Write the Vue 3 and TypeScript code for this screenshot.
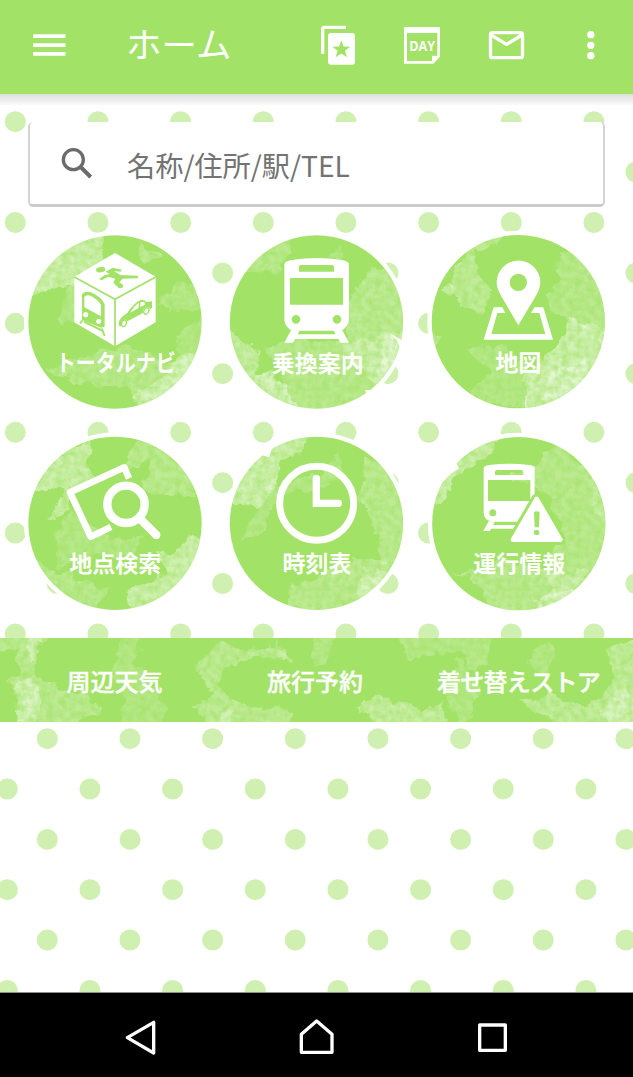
<script setup lang="ts">
interface Wash { d: string; o: number }
interface Tile {
  kind: 'total' | 'train' | 'map' | 'spot' | 'clock' | 'status'
  label: string
  box: string
  cx: number
  cy: number
  labelX: number
  labelY: number
  labelWidth: number
  washes: Wash[]
  nick?: string
}
interface DotRow { y: number; x: number }

const STEP = 82.66
const dotRows: DotRow[] = [
  { y: 121.7, x: 15.3 }, { y: 172, x: 57.3 }, { y: 222.5, x: 15.3 },
  { y: 273, x: 57.3 }, { y: 323.3, x: 15.3 }, { y: 373.7, x: 57.3 },
  { y: 432.3, x: 15.3 }, { y: 482.7, x: 57.3 }, { y: 533, x: 15.3 },
  { y: 583.5, x: 57.3 }, { y: 634, x: 15.3 },
  { y: 738.7, x: 47.3 }, { y: 789, x: 7.3 }, { y: 839.4, x: 47.3 },
  { y: 889.7, x: 7.3 }, { y: 940, x: 47.3 }, { y: 990.4, x: 7.3 },
]
const dots = dotRows.flatMap((r) =>
  Array.from({ length: 8 }, (_, k) => ({ x: r.x + k * STEP, y: r.y })),
)

const tiles: Tile[] = [
  {
    kind: 'total', label: 'トータルナビ', box: '39 30 522 522', cx: 300, cy: 291,
    labelX: 302, labelY: 437, labelWidth: 360,
    washes: [
      { d: 'M30 210L60 130L150 40L262 20L262 80L245 130L240 165L180 190L100 190Z', o: 0.5 },
      { d: 'M150 200L250 150L250 230L190 290L130 310Z', o: 0.25 },
      { d: 'M370 55L440 90L420 112L375 118Z', o: 0.3 },
      { d: 'M430 235L500 170L570 170L570 260L520 262Z', o: 0.25 },
      { d: 'M470 340L570 270L570 400L500 400Z', o: 0.22 },
      { d: 'M90 430L200 390L330 360L460 420L540 380L540 480L380 560L330 480L180 480Z', o: 0.27 },
      { d: 'M480 395L570 370L540 460L470 510L400 550L350 510L440 460Z', o: 0.45 },
    ],
  },
  {
    kind: 'train', label: '乗換案内', box: '45 30 522 522', cx: 304.5, cy: 291,
    labelX: 308, labelY: 440, labelWidth: 276,
    washes: [
      { d: 'M90 140L150 60L230 30L220 90L200 140L120 140Z', o: 0.28 },
      { d: 'M345 90L380 65L390 90L365 115Z', o: 0.22 },
      { d: 'M405 200L470 130L580 150L580 420L480 470L380 400L400 290Z', o: 0.32 },
      { d: 'M20 290L80 350L140 380L120 440L200 470L260 570L100 520Z', o: 0.42 },
      { d: 'M150 370L260 340L400 350L580 320L560 480L380 570L230 560L200 440Z', o: 0.28 },
      { d: 'M510 340L570 340L560 420L490 470Z', o: 0.4 },
      { d: 'M120 440L190 460L250 550L170 520Z', o: 0.3 },
    ],
    nick: 'M523 323L570 352L562 385L545 345ZM450 495L462 495L480 505L458 515Z',
  },
  {
    kind: 'map', label: '地図', box: '51 30 522 522', cx: 310, cy: 290,
    labelX: 310, labelY: 439, labelWidth: 139,
    washes: [
      { d: 'M120 120L180 55L280 25L240 60L180 80L180 120L230 190L210 260L150 250L100 200Z', o: 0.35 },
      { d: 'M80 185L120 180L105 215Z', o: 0.38 },
      { d: 'M425 80L500 70L590 190L590 320L450 290L390 220L430 160Z', o: 0.27 },
      { d: 'M330 450L440 360L470 270L590 330L570 460L450 560L330 560Z', o: 0.52 },
      { d: 'M160 370L270 360L330 410L340 550L220 540L170 500L230 440Z', o: 0.24 },
      { d: 'M40 320L80 330L60 380Z', o: 0.28 },
      { d: 'M390 450L520 400L500 500L390 550Z', o: 0.35 },
    ],
  },
  {
    kind: 'spot', label: '地点検索', box: '39 36 522 522', cx: 300, cy: 295,
    labelX: 301, labelY: 442, labelWidth: 276,
    washes: [
      { d: 'M50 190L120 100L230 40L220 130L260 170L160 200L170 260L100 290L150 190Z', o: 0.48 },
      { d: 'M350 60L400 35L520 130L540 210L440 210L385 200L410 100L330 140Z', o: 0.3 },
      { d: 'M130 310L180 260L260 330L380 340L350 400L250 380L120 430Z', o: 0.23 },
      { d: 'M430 390L570 330L550 440L440 530L350 560L330 500L450 450Z', o: 0.5 },
      { d: 'M60 410L170 460L280 490L240 560L100 510Z', o: 0.28 },
    ],
  },
  {
    kind: 'clock', label: '時刻表', box: '45 36 522 522', cx: 304.5, cy: 295,
    labelX: 306, labelY: 442, labelWidth: 207,
    washes: [
      { d: 'M40 240L90 120L180 50L280 30L265 70L200 110L190 170L140 240L60 250Z', o: 0.5 },
      { d: 'M150 190L320 150L370 80L380 170L280 200L200 200L140 330L80 350L130 250Z', o: 0.24 },
      { d: 'M450 100L510 110L590 230L580 390L500 430L470 270L430 220Z', o: 0.3 },
      { d: 'M230 480L440 400L570 420L480 520L330 570L210 550Z', o: 0.3 },
      { d: 'M440 435L520 450L480 510L430 515Z', o: 0.45 },
    ],
    nick: 'M125 75L145 92L162 97L170 75L145 55Z',
  },
  {
    kind: 'status', label: '運行情報', box: '51 36 522 522', cx: 311.5, cy: 296,
    labelX: 313, labelY: 442, labelWidth: 276,
    washes: [
      { d: 'M50 240L80 150L160 70L250 40L215 100L170 130L110 160L80 250Z', o: 0.46 },
      { d: 'M280 160L370 110L420 50L590 180L590 440L450 540L380 450L440 330L410 220L350 180Z', o: 0.28 },
      { d: 'M110 440L180 450L260 400L400 450L520 440L440 540L330 570L220 560L190 480Z', o: 0.3 },
      { d: 'M360 530L420 490L480 500L410 550Z', o: 0.48 },
      { d: 'M500 110L590 280L560 300Z', o: 0.22 },
    ],
    nick: 'M122 112L132 130L108 146L84 170L70 150L100 105Z',
  },
]

const bandWashes: Wash[] = [
  { d: 'M-20 -10L160 -10L110 30L100 90L130 130L260 170L300 220L220 270L40 270L70 170L20 130L60 100L50 30L-20 40Z', o: 0.3 },
  { d: 'M90 -10L125 -10L110 70L85 70ZM50 120L100 110L120 180L110 270L50 260Z', o: 0.4 },
  { d: 'M370 -10L430 -10L400 70L440 130L500 210L470 270L350 260L380 180L340 90Z', o: 0.22 },
  { d: 'M580 80L660 10L700 40L830 20L870 60L690 70L660 130L700 190L870 220L850 270L620 260L580 200L640 170Z', o: 0.33 },
  { d: 'M660 220L700 210L700 270L650 265ZM835 -10L860 50L840 65Z', o: 0.3 },
  { d: 'M930 -10L1010 -10L980 60L940 90ZM1190 -10L1480 -10L1460 80L1400 100L1380 40L1220 60Z', o: 0.25 },
  { d: 'M1070 200L1130 170L1260 220L1330 190L1340 270L1130 270Z', o: 0.42 },
  { d: 'M1370 60L1440 150L1400 270L1350 200ZM1580 70L1640 10L1670 50L1640 110Z', o: 0.23 },
  { d: 'M1560 190L1650 170L1760 210L1850 120L1820 30L1910 0L1910 270L1670 270L1620 220Z', o: 0.38 },
  { d: 'M1800 220L1860 160L1910 180L1910 260L1830 250Z', o: 0.33 },
]
const bandItems: string[] = ['周辺天気', '旅行予約', '着せ替えストア']
</script>

<template>
  <div class="screen">
    <svg class="dots" viewBox="0 0 633 992" width="633" height="992">
      <defs>
        <filter id="wash" filterUnits="userSpaceOnUse" x="-40" y="-40" width="1980" height="660" color-interpolation-filters="sRGB">
          <feTurbulence type="fractalNoise" baseFrequency="0.022" numOctaves="5" seed="7" result="edge" />
          <feDisplacementMap in="SourceGraphic" in2="edge" scale="46" xChannelSelector="R" yChannelSelector="G" result="shape" />
          <feGaussianBlur in="shape" stdDeviation="2.2" result="soft" />
          <feTurbulence type="fractalNoise" baseFrequency="0.05" numOctaves="4" seed="3" />
          <feColorMatrix values="0 0 0 0 1  0 0 0 0 1  0 0 0 0 1  1.3 0 0 0 0.08" result="grain" />
          <feComposite in="soft" in2="grain" operator="in" />
        </filter>
      </defs>
      <circle v-for="(d, i) in dots" :key="i" :cx="d.x" :cy="d.y" r="10.5" fill="#cff0b0" />
    </svg>

    <header class="bar">
      <svg class="menu" viewBox="99 72 98 126" width="33" height="42" fill="#fff">
        <path d="M99 103h97v11H99zM99 130h97v11H99zM99 156h97v11H99z" />
      </svg>
      <h1>ホーム</h1>
      <div class="actions">
        <svg viewBox="30 72 108 126" width="36" height="42">
          <path d="M38 161V88Q38 82 44 82H108" fill="none" stroke="#fff" stroke-width="10" />
          <rect x="54" y="99" width="81" height="95" rx="9" fill="#fff" />
          <path d="M94 121L100.500 139.500L121 140L105 152L111 172L94 160.500L77 172L83 152L67 140L87.500 139.500Z" fill="#a2e266" />
        </svg>
        <svg class="day" viewBox="279 72 114 126" width="38" height="42">
          <path fill="#fff" fill-rule="evenodd" d="M282 81H390V170L370 191H282ZM291 99V183H366V167H382V99Z" />
          <text x="336.500" y="153" text-anchor="middle" textLength="78" lengthAdjust="spacingAndGlyphs">DAY</text>
        </svg>
        <svg viewBox="534 72 111 126" width="37" height="42" fill="none" stroke="#fff" stroke-width="10">
          <rect x="541.500" y="98" width="96" height="75" rx="6" />
          <path d="M543 105L589.500 133L636 105" />
        </svg>
        <svg class="more" viewBox="828 72 30 126" width="10" height="42" fill="#fff">
          <circle cx="842.500" cy="104" r="11" /><circle cx="842.500" cy="136" r="11" /><circle cx="842.500" cy="167" r="11" />
        </svg>
      </div>
    </header>

    <main>
      <div class="search">
        <svg viewBox="183 444 96 99" width="32" height="33" fill="none" stroke="#6b6b6b">
          <circle cx="220" cy="482" r="30" stroke-width="10" />
          <path d="M242 504L272 534" stroke-width="12" />
        </svg>
        <span>名称/住所/駅/TEL</span>
      </div>

      <div class="tiles">
        <div v-for="t in tiles" :key="t.kind" class="tile">
          <svg :viewBox="t.box" width="174" height="174">
            <clipPath :id="'disc-' + t.kind"><circle :cx="t.cx" :cy="t.cy" r="260" /></clipPath>
            <circle :cx="t.cx" :cy="t.cy" r="273" fill="#fff" />
            <circle :cx="t.cx" :cy="t.cy" r="260" fill="#a2e266" />
            <g :clip-path="`url(#disc-${t.kind})`">
              <g filter="url(#wash)">
                <path v-for="(w, i) in t.washes" :key="i" :d="w.d" fill="#fff" :fill-opacity="w.o" />
              </g>
            </g>
            <path v-if="t.nick" :d="t.nick" fill="#fff" />

            <g v-if="t.kind === 'total'" fill="#a2e266">
              <path fill="#fff" d="M300 84L422 155V292L300 364L178 292V155Z" />
              <path d="M178 156L300 223L422 156M300 223V364" fill="none" stroke="#a2e266" stroke-width="5" />
              <ellipse cx="257" cy="134" rx="14" ry="8" transform="rotate(-8 257 134)" />
              <path d="M272 140L293 128L320 134L317 140L297 138L315 150L367 152Q373 157 365 160L323 161L313 172L325 180L322 189L312 190L295 173L301 161L280 155L260 166L252 161L269 151L284 147Z" />
              <path fill-rule="evenodd" d="M201 207Q215 194 238 207Q262 220 269 238V305L260 308L201 285ZM208 216V247L258 274V239Q247 222 228 213Q215 208 208 216ZM205 266A7 7 0 1 0 219 272A7 7 0 1 0 205 266ZM244 286A7 7 0 1 0 258 292A7 7 0 1 0 244 286Z" />
              <path d="M203 286L195 295M207 290L264 318M217 286L258 305M260 310L269 333" fill="none" stroke="#a2e266" stroke-width="6" />
              <path fill-rule="evenodd" d="M311 296Q312 278 337 264Q352 240 374 226Q391 223 393 231L411 229V249L405 253Q403 240 389 249Q382 255 383 265L337 289Q334 280 324 286Q317 291 318 304L312 303ZM345 263L371 249V233Q356 244 345 263ZM376 231V246L390 239L388 231Z" />
              <ellipse cx="327" cy="295" rx="7" ry="10" fill="none" stroke="#a2e266" stroke-width="4" transform="rotate(25 327 295)" />
              <ellipse cx="394" cy="258" rx="7" ry="10" fill="none" stroke="#a2e266" stroke-width="4" transform="rotate(25 394 258)" />
            </g>

            <g v-else-if="t.kind === 'train'" fill="#fff">
              <path fill-rule="evenodd" d="M208 118Q208 109 230 105Q305 93 380 105Q402 109 402 118V284Q400 307 378 317H232Q210 307 208 284ZM258 120Q252 120 252 126V140H357V126Q357 120 351 120ZM225 159V239H384V159ZM230 283A13 13 0 1 0 256 283A13 13 0 1 0 230 283ZM353 283A13 13 0 1 0 379 283A13 13 0 1 0 353 283Z" />
              <path d="M228 316H254L248 328H362L356 316H382L402 353H376L370 342H240L234 353H208Z" />
            </g>

            <g v-else-if="t.kind === 'map'" fill="#fff">
              <path fill-rule="evenodd" d="M310 301L259 214Q245 191 245 172A65.500 65.500 0 0 1 376 172Q376 191 362 214ZM284 172A26 26 0 1 0 336 172A26 26 0 1 0 284 172Z" />
              <path d="M236 247H262L271 264H247L229 327H391L373 264H348L358 247H385L414 344H206Z" />
            </g>

            <g v-else-if="t.kind === 'spot'" fill="none" stroke="#fff" stroke-linejoin="round">
              <path d="M342 160L328 127L165 202L227 335L288 306" stroke-width="20" />
              <circle cx="333" cy="238" r="56" stroke-width="25" />
              <path d="M377 283L424 330" stroke-width="25" stroke-linecap="round" />
            </g>

            <g v-else-if="t.kind === 'clock'" fill="none" stroke="#fff">
              <circle cx="305" cy="235" r="111" stroke-width="21" />
              <path d="M304 160V235H370" stroke-width="22" stroke-linecap="round" />
            </g>

            <g v-else fill="#fff">
              <path fill-rule="evenodd" d="M206 130Q206 122 223 120Q283 113 343 120Q359 123 359 130V290H233Q208 288 206 264ZM246 135Q240 135 240 141V150H325V141Q325 135 319 135ZM219 165V228H346V165ZM223 263A10.500 10.500 0 1 0 244 263A10.500 10.500 0 1 0 223 263Z" />
              <path d="M221 289H239L234 300H320V311H228L224 318H205Z" />
              <path d="M365 222L436 344H294Z" fill="#a2e266" stroke="#a2e266" stroke-width="32" stroke-linejoin="round" />
              <path d="M365 222L436 344H294Z" stroke="#fff" stroke-width="14" stroke-linejoin="round" />
              <path d="M357 260Q365 258 374 260L372 307H359Z" fill="#a2e266" />
              <rect x="357" y="315" width="16" height="15" rx="5" fill="#a2e266" />
            </g>

            <text class="label" :x="t.labelX" :y="t.labelY" text-anchor="middle" :textLength="t.labelWidth" lengthAdjust="spacingAndGlyphs">{{ t.label }}</text>
          </svg>
        </div>
      </div>

      <nav class="band">
        <svg class="texture" viewBox="0 0 1899 252" width="633" height="84">
          <g filter="url(#wash)">
            <path v-for="(w, i) in bandWashes" :key="i" :d="w.d" fill="#fff" :fill-opacity="w.o" />
          </g>
        </svg>
        <span v-for="b in bandItems" :key="b" :class="{ long: b.length > 4 }">{{ b }}</span>
      </nav>
    </main>

    <footer class="system">
      <svg viewBox="69 150 108 108"><path d="M82 203L161 157V249Z" /></svg>
      <svg viewBox="597 150 108 108"><path d="M604 247V193L650 153L696 193V247Z" /></svg>
      <svg viewBox="1125 150 108 108"><path d="M1139 165H1216V241H1139Z" /></svg>
    </footer>
  </div>
</template>

<style>
body { margin: 0; background: #fff; }
</style>

<style scoped>
.screen {
  position: relative;
  display: flex;
  flex-direction: column;
  width: 633px;
  height: 1077px;
  overflow: hidden;
  background: #fff;
  font-family: "Noto Sans CJK JP", "Noto Sans", sans-serif;
}
svg { display: block; flex: none; }
.dots { position: absolute; left: 0; top: 0; }
.bar {
  position: relative;
  display: flex;
  box-sizing: border-box;
  height: 94px;
  flex: none;
  padding: 24px 37px 0 33px;
  background: #a2e266;
}
.bar::after {
  content: "";
  position: absolute;
  left: 0;
  right: 0;
  top: 94px;
  height: 11px;
  background: linear-gradient(#dadfd6 0, #e6e6e6 2px, #eaeaea 5px, #fafafa 11px);
}
h1 {
  margin: 0 0 0 60px;
  color: #fff;
  font-size: 35.5px;
  font-weight: 400;
  line-height: 38px;
}
.actions { display: flex; gap: 47px; margin-left: auto; }
.more { margin-left: 14px; }
.day text { fill: #fff; font: 700 41px "Open Sans", sans-serif; }
main { position: relative; display: flex; flex-direction: column; flex: 1; }
.search {
  display: flex;
  align-items: center;
  box-sizing: border-box;
  height: 85px;
  margin: 28px 28px 0;
  padding-left: 31px;
  border: solid #d4d4d4;
  border-width: 0 2px 3px;
  border-bottom-color: #cbcbcb;
  border-radius: 5px;
  background: #fff;
}
.search span {
  margin-left: 34px;
  padding-top: 3px;
  color: #737373;
  font-size: 28.2px;
  line-height: 40px;
}
.tiles {
  display: grid;
  grid-template-columns: repeat(3, 174px);
  gap: 28px;
  margin: 28px 0 0 28px;
}
.tile svg { overflow: visible; }
.label { fill: #fff; font-size: 69px; font-weight: 700; }
.band {
  position: relative;
  display: grid;
  grid-template-columns: 229px 172px 232px;
  align-items: center;
  height: 84px;
  margin-top: 27px;
  background: #a2e266;
  color: #fff;
  font-size: 24px;
  font-weight: 500;
  text-align: center;
}
.texture { position: absolute; inset: 0; }
.band span {
  position: relative;
  padding-top: 1px;
  line-height: 36px;
  white-space: nowrap;
  -webkit-text-stroke: 0.4px #fff;
}
.band .long { letter-spacing: -0.7px; padding-left: 3px; }
.system {
  position: relative;
  display: flex;
  gap: 140px;
  box-sizing: border-box;
  height: 85px;
  flex: none;
  padding: 27px 0 0 123px;
  border-top: 1px solid #8d8d8d;
  background: #000;
}
.system svg {
  width: 36px;
  height: 36px;
  overflow: visible;
  fill: none;
  stroke: #fff;
  stroke-width: 10;
  stroke-linejoin: round;
}
</style>
